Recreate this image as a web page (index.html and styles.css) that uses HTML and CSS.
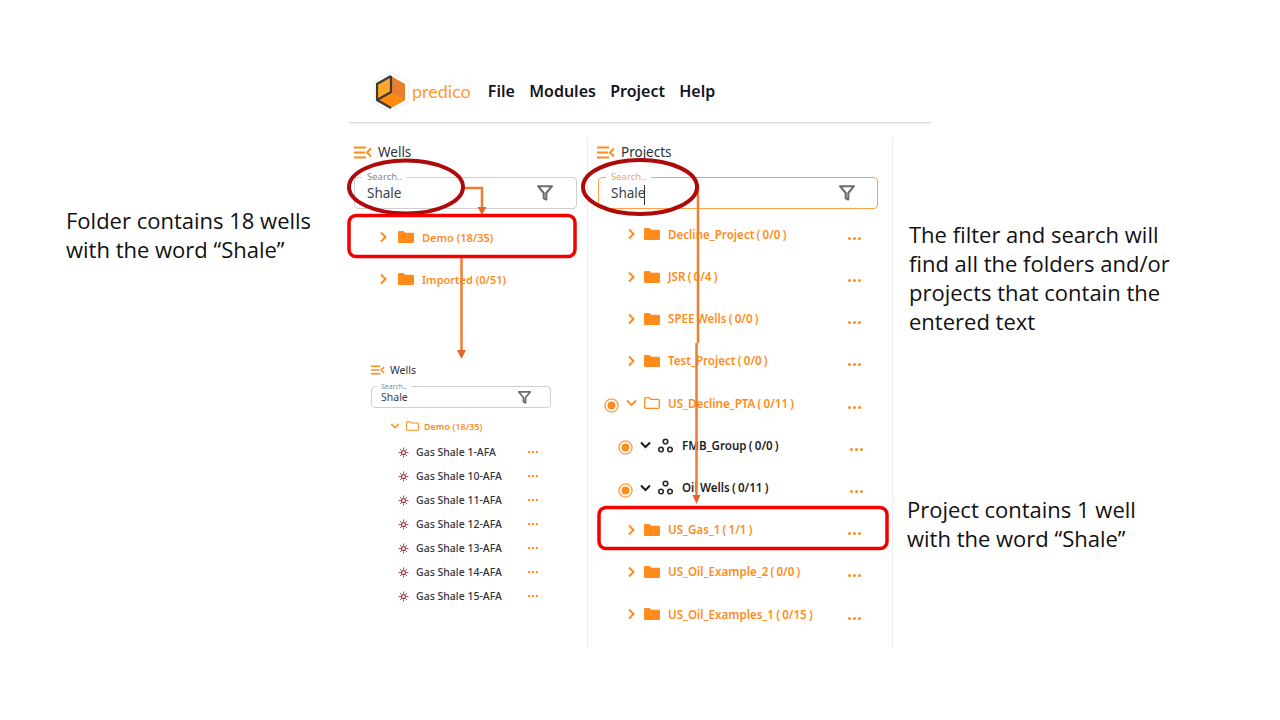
FILE: index.html
```html
<!DOCTYPE html>
<html lang="en">
<head>
    <meta charset="UTF-8">
    <title>Predico search and filter</title>
    <link rel="stylesheet" href="styles.css">
</head>
<body>
    <svg class="defs" width="0" height="0">
        <symbol id="i-collapse" viewBox="0 0 18 13">
            <path d="M0 1.500h12M0 6.500h11M0 11.500h12M17 2.500l-4 4 4 4" fill="none" stroke="#ff8c1a" stroke-width="2"/>
        </symbol>
        <symbol id="i-filter" viewBox="0 0 16 16">
            <path d="M1 1.200h14L9.300 8v6.500l-2.600-1.300V8z" fill="none" stroke="#6b6b6b" stroke-width="2.100" stroke-linejoin="round"/>
        </symbol>
        <symbol id="i-folder" viewBox="0 0 16 12">
            <path d="M0 1.200A1.200 1.200 0 0 1 1.200 0h4.300l1.700 1.800h7.600A1.200 1.200 0 0 1 16 3v7.800a1.200 1.200 0 0 1-1.200 1.200H1.200A1.200 1.200 0 0 1 0 10.800z" fill="#ff8c1a"/>
        </symbol>
        <symbol id="i-folder-open" viewBox="0 0 16 12">
            <path d="M.7 1.700a1 1 0 0 1 1-1h3.600l1.700 1.700h7.300a1 1 0 0 1 1 1v6.900a1 1 0 0 1-1 1H1.700a1 1 0 0 1-1-1z" fill="none" stroke="#ff8c1a" stroke-width="1.300"/>
        </symbol>
        <symbol id="i-right" viewBox="0 0 11 12">
            <path d="M3 1.500l4.500 4.500L3 10.500" fill="none" stroke="#ff8c1a" stroke-width="2"/>
        </symbol>
        <symbol id="i-down" viewBox="0 0 11 12">
            <path d="M1 3.500l4.500 4.500L10 3.500" fill="none" stroke="#ff8c1a" stroke-width="1.800"/>
        </symbol>
        <symbol id="i-down-dark" viewBox="0 0 11 12">
            <path d="M1 3.500l4.500 4.500L10 3.500" fill="none" stroke="#1c1c1c" stroke-width="2"/>
        </symbol>
        <symbol id="i-radio" viewBox="0 0 16 16">
            <circle cx="8" cy="8" r="7" fill="none" stroke="#ff9a3c" stroke-width="1.400"/>
            <circle cx="8" cy="8" r="4.200" fill="#ff8c1a"/>
        </symbol>
        <symbol id="i-group" viewBox="0 0 15 15">
            <g fill="none" stroke="#2a2a2a" stroke-width="1.600">
                <circle cx="7.500" cy="3.500" r="2.300"/>
                <circle cx="3" cy="11.500" r="2.300"/>
                <circle cx="12" cy="11.500" r="2.300"/>
            </g>
        </symbol>
        <symbol id="i-dots" viewBox="0 0 13 3">
            <circle cx="1.500" cy="1.500" r="1.500" fill="#ff8c1a"/>
            <circle cx="6.500" cy="1.500" r="1.500" fill="#ff8c1a"/>
            <circle cx="11.500" cy="1.500" r="1.500" fill="#ff8c1a"/>
        </symbol>
        <symbol id="i-gas" viewBox="0 0 12 12">
            <circle cx="6" cy="6" r="2.300" fill="#f3d6d6" stroke="#a03c48" stroke-width="1.100"/>
            <path d="M6 .5v2.500M6 9v2.500M.5 6H3M9 6h2.500M2.100 2.100l1.800 1.800M8.100 8.100l1.800 1.800M9.900 2.100L8.100 3.900M3.900 8.100L2.100 9.900" stroke="#a03c48" stroke-width="1"/>
        </symbol>
    </svg>

    <div class="slide">
        <div class="app">
            <header class="menubar">
                <svg class="logo" viewBox="0 0 36 40" width="36" height="40">
                    <path d="M18 0l18 10v20L18 40 0 30V10z" fill="#fff" stroke="#ececec"/>
                    <path d="M18 4l14 8v16L18 36 4 28V12z" fill="#e87f2c"/>
                    <path d="M18 4L4 12v16l14-8z" fill="#ffa726"/>
                    <path d="M18 20L4 28l14 8 14-8z" fill="#ff8a0d"/>
                    <path d="M18 4L4 12v16l14 8M18 4v16L4 28" fill="none" stroke="#3a3a3a" stroke-width="2.200"/>
                </svg>
                <span class="brand">predico</span>
                <nav class="menu">
                    <span>File</span>
                    <span>Modules</span>
                    <span>Project</span>
                    <span>Help</span>
                </nav>
            </header>

            <div class="panels">
                <section class="panel panel-wells">
                    <div class="panel-title"><svg class="ic-collapse"><use href="#i-collapse"/></svg>Wells</div>
                    <div class="search">
                        <span class="search-label">Search..</span>
                        <span class="search-value">Shale</span>
                        <svg class="ic-filter"><use href="#i-filter"/></svg>
                    </div>
                    <ul class="tree">
                        <li class="row row-closed"><svg class="ic-chev"><use href="#i-right"/></svg><svg class="ic-folder"><use href="#i-folder"/></svg><span class="name">Demo (18/35)</span></li>
                        <li class="row row-closed"><svg class="ic-chev"><use href="#i-right"/></svg><svg class="ic-folder"><use href="#i-folder"/></svg><span class="name">Imported (0/51)</span></li>
                    </ul>

                    <div class="inset">
                        <div class="panel-title"><svg class="ic-collapse"><use href="#i-collapse"/></svg>Wells</div>
                        <div class="search">
                            <span class="search-label">Search..</span>
                            <span class="search-value">Shale</span>
                            <svg class="ic-filter"><use href="#i-filter"/></svg>
                        </div>
                        <div class="inset-folder"><svg class="ic-chev"><use href="#i-down"/></svg><svg class="ic-folder"><use href="#i-folder-open"/></svg><span class="name">Demo (18/35)</span></div>
                        <ul class="wells">
                            <li><svg class="ic-gas"><use href="#i-gas"/></svg><span>Gas Shale 1-AFA</span><svg class="ic-dots"><use href="#i-dots"/></svg></li>
                            <li><svg class="ic-gas"><use href="#i-gas"/></svg><span>Gas Shale 10-AFA</span><svg class="ic-dots"><use href="#i-dots"/></svg></li>
                            <li><svg class="ic-gas"><use href="#i-gas"/></svg><span>Gas Shale 11-AFA</span><svg class="ic-dots"><use href="#i-dots"/></svg></li>
                            <li><svg class="ic-gas"><use href="#i-gas"/></svg><span>Gas Shale 12-AFA</span><svg class="ic-dots"><use href="#i-dots"/></svg></li>
                            <li><svg class="ic-gas"><use href="#i-gas"/></svg><span>Gas Shale 13-AFA</span><svg class="ic-dots"><use href="#i-dots"/></svg></li>
                            <li><svg class="ic-gas"><use href="#i-gas"/></svg><span>Gas Shale 14-AFA</span><svg class="ic-dots"><use href="#i-dots"/></svg></li>
                            <li><svg class="ic-gas"><use href="#i-gas"/></svg><span>Gas Shale 15-AFA</span><svg class="ic-dots"><use href="#i-dots"/></svg></li>
                        </ul>
                    </div>
                </section>

                <section class="panel panel-projects">
                    <div class="panel-title"><svg class="ic-collapse"><use href="#i-collapse"/></svg>Projects</div>
                    <div class="search search-active">
                        <span class="search-label">Search..</span>
                        <span class="search-value">Shale<i class="caret"></i></span>
                        <svg class="ic-filter"><use href="#i-filter"/></svg>
                    </div>
                    <ul class="tree">
                        <li class="row row-closed"><svg class="ic-chev"><use href="#i-right"/></svg><svg class="ic-folder"><use href="#i-folder"/></svg><span class="name">Decline_Project ( 0/0 )</span><svg class="ic-dots"><use href="#i-dots"/></svg></li>
                        <li class="row row-closed"><svg class="ic-chev"><use href="#i-right"/></svg><svg class="ic-folder"><use href="#i-folder"/></svg><span class="name">JSR ( 0/4 )</span><svg class="ic-dots"><use href="#i-dots"/></svg></li>
                        <li class="row row-closed"><svg class="ic-chev"><use href="#i-right"/></svg><svg class="ic-folder"><use href="#i-folder"/></svg><span class="name">SPEE Wells ( 0/0 )</span><svg class="ic-dots"><use href="#i-dots"/></svg></li>
                        <li class="row row-closed"><svg class="ic-chev"><use href="#i-right"/></svg><svg class="ic-folder"><use href="#i-folder"/></svg><span class="name">Test_Project ( 0/0 )</span><svg class="ic-dots"><use href="#i-dots"/></svg></li>
                        <li class="row row-open"><svg class="ic-radio"><use href="#i-radio"/></svg><svg class="ic-chev"><use href="#i-down"/></svg><svg class="ic-folder"><use href="#i-folder-open"/></svg><span class="name">US_Decline_PTA ( 0/11 )</span><svg class="ic-dots"><use href="#i-dots"/></svg></li>
                        <li class="row row-group"><svg class="ic-radio"><use href="#i-radio"/></svg><svg class="ic-chev"><use href="#i-down-dark"/></svg><svg class="ic-group"><use href="#i-group"/></svg><span class="name">FMB_Group ( 0/0 )</span><svg class="ic-dots"><use href="#i-dots"/></svg></li>
                        <li class="row row-group"><svg class="ic-radio"><use href="#i-radio"/></svg><svg class="ic-chev"><use href="#i-down-dark"/></svg><svg class="ic-group"><use href="#i-group"/></svg><span class="name">Oil Wells ( 0/11 )</span><svg class="ic-dots"><use href="#i-dots"/></svg></li>
                        <li class="row row-closed"><svg class="ic-chev"><use href="#i-right"/></svg><svg class="ic-folder"><use href="#i-folder"/></svg><span class="name">US_Gas_1 ( 1/1 )</span><svg class="ic-dots"><use href="#i-dots"/></svg></li>
                        <li class="row row-closed"><svg class="ic-chev"><use href="#i-right"/></svg><svg class="ic-folder"><use href="#i-folder"/></svg><span class="name">US_Oil_Example_2 ( 0/0 )</span><svg class="ic-dots"><use href="#i-dots"/></svg></li>
                        <li class="row row-closed"><svg class="ic-chev"><use href="#i-right"/></svg><svg class="ic-folder"><use href="#i-folder"/></svg><span class="name">US_Oil_Examples_1 ( 0/15 )</span><svg class="ic-dots"><use href="#i-dots"/></svg></li>
                    </ul>
                </section>
            </div>
        </div>

        <!-- slide annotations drawn over the screenshot -->
        <svg class="marks" viewBox="0 0 1280 720" width="1280" height="720">
            <g fill="none" stroke="#ed7d31" stroke-width="2.500">
                <path d="M464 188h18v20"/>
                <path d="M461.500 257v94"/>
                <path d="M698 184v159M696.500 343v152"/>
            </g>
            <g fill="#e0662a">
                <path d="M477.500 207h9l-4.500 8z"/>
                <path d="M457 350h9l-4.500 9z"/>
                <path d="M692.500 495h8l-4 9z"/>
            </g>
            <g fill="none" stroke="#ae0a0a" stroke-width="4">
                <ellipse cx="406" cy="187" rx="57" ry="26.500"/>
                <ellipse cx="640" cy="187" rx="57" ry="27"/>
            </g>
            <g fill="none" stroke="#f50000" stroke-width="3.500">
                <rect x="349" y="215.500" width="226" height="41" rx="7"/>
                <rect x="599" y="507.500" width="288" height="41" rx="7"/>
            </g>
        </svg>

        <p class="note note-folder">Folder contains 18 wells<br>with the word “Shale”</p>
        <p class="note note-search">The filter and search will<br>find all the folders and/or<br>projects that contain the<br>entered text</p>
        <p class="note note-project">Project contains 1 well<br>with the word “Shale”</p>
    </div>
</body>
</html>
```

FILE: styles.css
```css
* {
    box-sizing: border-box;
}
html, body {
    margin: 0;
    background: #fff;
}
.defs {
    position: absolute;
}
.slide {
    position: relative;
    width: 1280px;
    height: 720px;
    overflow: hidden;
    padding: 65px 0 0 349px;
    font-family: "Noto Sans", sans-serif;
}
.app {
    width: 582px;
}
.menubar {
    height: 58px;
    display: flex;
    align-items: center;
    padding: 0 0 5px 24px;
    border-bottom: 1px solid #dcdcdc;
    box-shadow: 0 2px 2px -1px rgba(0,0,0,0.1);
}
.logo {
    flex: none;
    margin-top: 2px;
}
.brand {
    margin-left: 3px;
    font-family: Lato, sans-serif;
    font-size: 18px;
    color: #ff9a33;
}
.menu {
    display: flex;
    gap: 14.300px;
    margin-left: 17px;
    font-size: 16px;
    font-weight: 600;
    color: #14141c;
}
.panels {
    display: flex;
    margin-top: 14px;
    height: 511px;
}
.panel {
    border-right: 1px solid #eeeeee;
}
.panel-wells {
    width: 239px;
    padding-left: 5px;
}
.panel-projects {
    width: 305px;
    padding-left: 9px;
}
.panel-title {
    height: 30px;
    display: flex;
    align-items: center;
    gap: 6px;
    font-size: 13.500px;
    color: #2b3040;
}
.ic-collapse {
    width: 18px;
    height: 13px;
}
.search {
    position: relative;
    height: 32px;
    width: 223px;
    margin-top: 10px;
    display: flex;
    align-items: center;
    justify-content: space-between;
    padding: 0 23px 0 12px;
    border: 1px solid #cfcfcf;
    border-radius: 4px;
}
.panel-projects .search {
    width: 280px;
    margin-left: 1px;
    padding-right: 22px;
}
.search-active {
    border-color: #ffa04d;
}
.search-label {
    position: absolute;
    left: 7px;
    top: -7px;
    padding: 0 5px;
    background: #fff;
    font-size: 9.500px;
    line-height: 12px;
    color: #8a8a8a;
}
.search-active .search-label {
    color: #f0a468;
}
.search-value {
    position: relative;
    font-size: 13.500px;
    color: #3c3f48;
}
.caret {
    position: absolute;
    right: 0;
    top: 1px;
    width: 1px;
    height: 20px;
    background: #333;
}
.ic-filter {
    width: 16px;
    height: 16px;
}
.tree, .wells {
    list-style: none;
    margin: 0;
    padding: 0;
}
.tree {
    margin-top: 4.300px;
}
.row {
    height: 42.200px;
    display: flex;
    align-items: center;
    gap: 7px;
    font-size: 11.600px;
    font-weight: 600;
    word-spacing: -0.800px;
    color: #ff8c1a;
}
.row-closed {
    padding-left: 29px;
}
.panel-wells .row {
    gap: 9px;
    font-size: 11px;
    word-spacing: 0;
}
.panel-wells .row-closed {
    padding-left: 24px;
}
.panel-wells .ic-folder {
    margin-right: -1px;
}
.panel-wells .tree {
    margin-top: 7px;
}
.row-open {
    padding-left: 7px;
}
.row-group {
    padding-left: 21px;
    color: #1f1f1f;
}
.ic-chev {
    flex: none;
    width: 11px;
    height: 12px;
}
.ic-folder {
    flex: none;
    width: 16px;
    height: 12px;
    margin-right: 1px;
}
.ic-radio {
    flex: none;
    width: 15px;
    height: 15px;
    margin-top: 5px;
}
.ic-group {
    flex: none;
    width: 15px;
    height: 15px;
    margin-right: 2px;
}
.ic-dots {
    flex: none;
    width: 13px;
    height: 3px;
    margin: 8px 31px 0 auto;
}
.row-group .ic-dots {
    margin-right: 29px;
}
/* smaller copy of the panel, pasted under the tree */
.inset {
    margin: 60px 0 0 17px;
}
.inset .panel-title {
    height: 20px;
    gap: 5px;
    font-size: 10.500px;
}
.inset .ic-collapse {
    width: 14px;
    height: 10px;
}
.inset .search {
    width: 180px;
    height: 22px;
    margin-top: 6px;
    padding: 0 19px 0 9px;
}
.inset .search-label {
    left: 5px;
    top: -5px;
    font-size: 7px;
    line-height: 9px;
    padding: 0 4px;
}
.inset .search-value {
    font-size: 10.500px;
}
.inset .ic-filter {
    width: 13px;
    height: 13px;
}
.inset-folder {
    height: 18px;
    margin-top: 9px;
    padding-left: 19px;
    display: flex;
    align-items: center;
    gap: 6px;
    font-size: 9px;
    font-weight: 600;
    color: #ff8c1a;
}
.inset-folder .ic-chev {
    width: 10px;
    height: 10px;
}
.inset-folder .ic-folder {
    width: 13px;
    height: 10px;
}
.wells {
    margin-top: 5px;
}
.wells li {
    width: 167px;
    height: 24px;
    padding-left: 27px;
    display: flex;
    align-items: center;
    font-size: 10.500px;
    font-weight: 500;
    color: #33333d;
}
.ic-gas {
    flex: none;
    width: 11px;
    height: 11px;
    margin-right: 7px;
}
.wells .ic-dots {
    width: 10px;
    height: 2.500px;
    margin: 0 0 0 auto;
}
.marks {
    position: absolute;
    left: 0;
    top: 0;
}
.note {
    position: absolute;
    margin: 0;
    font-family: "Open Sans", sans-serif;
    font-size: 22px;
    line-height: 29px;
    color: #111;
}
.note-folder {
    left: 66px;
    top: 206px;
}
.note-search {
    left: 909px;
    top: 220px;
}
.note-project {
    left: 907px;
    top: 495px;
}
```
